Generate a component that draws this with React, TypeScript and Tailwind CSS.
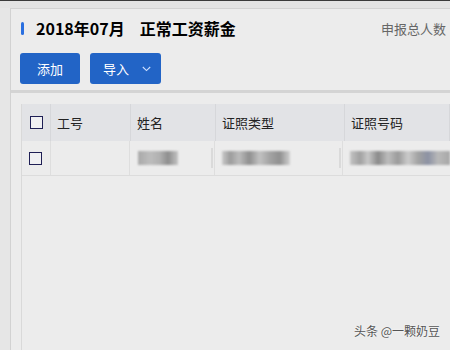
import React from "react";

const cjk = "font-['Microsoft_YaHei','Noto_Sans_CJK_SC',sans-serif]";

/** Small square checkbox drawn with a border. */
function Box() {
  return <span className="block h-[13px] w-[13px] border-[1.5px] border-[#1f1f55] bg-[#f0f0f2]" />;
}

/** Stand-in for blurred cell text. */
function Smudge({ w, tones }: { w: number; tones: string }) {
  return (
    <span
      className="block h-[14px] blur-[1.1px]"
      style={{ width: w, backgroundImage: tones }}
    />
  );
}

const cols = ["w-[29px]", "w-[80px]", "w-[85px]", "w-[129px]", "flex-1"];

export default function App() {
  return (
    <div className={`relative h-[350px] w-[450px] overflow-hidden bg-[#e6e6e6] ${cjk}`}>
      <div className="h-px bg-[#3a3a3a]" />
      <div className="h-[7px] bg-[#e3e3e3]" />

      <div className="ml-[10px] h-[342px] border-l border-t border-[#d2d2d2] bg-[#ececec]">
        {/* header */}
        <div className="h-[84px] border-b-[3px] border-[#d4d4d4] pl-[10px] pr-[4px] pt-[10px]">
          <div className="flex h-[18px] items-center">
            <span className="h-[13px] w-[3px] rounded-full bg-[#2a6fe0]" />
            <span className="ml-[12px] text-[16px] font-bold leading-none text-black">
              2018年07月
            </span>
            <span className="ml-[15px] text-[16px] font-bold leading-none text-black">
              正常工资薪金
            </span>
            <span className="ml-auto text-[13px] leading-none text-[#666]">申报总人数</span>
          </div>
          <div className="-ml-px mt-[16px] flex gap-[10px]">
            <button className="flex h-[31px] w-[60px] items-center justify-center rounded-[3px] bg-[#2264c6] text-[13px] text-white">
              添加
            </button>
            <button className="flex h-[31px] w-[71px] items-center rounded-[3px] bg-[#2264c6] pl-[13px] text-[13px] text-white">
              导入
              <svg className="ml-[13px]" width="9" height="6" viewBox="0 0 9 6" fill="none">
                <path d="M0.8 1 L4.5 4.6 L8.2 1" stroke="#cfe0ff" strokeWidth="1.1" />
              </svg>
            </button>
          </div>
        </div>

        {/* table */}
        <div className="pl-[10px] pt-[11px]">
          <div className="h-[300px] border-l border-[#d9d9d9]">
            <div className="flex h-[37px] bg-[#e2e3e6] text-[13px] text-[#222]">
              {["", "工号", "姓名", "证照类型", "证照号码"].map((t, i) => (
                <div
                  key={i}
                  className={`${cols[i]} flex items-center border-r border-[#d6d7da] ${i === 0 ? "justify-center" : "pl-[6px]"}`}
                >
                  {i === 0 ? <Box /> : t}
                </div>
              ))}
            </div>
            <div className="flex h-[35px] border-b border-[#dcdcdc] bg-[#ececec]">
              <div className={`${cols[0]} flex items-center justify-center border-r border-[#dedede]`}>
                <Box />
              </div>
              <div className={`${cols[1]} border-r border-[#dedede]`} />
              <div className={`${cols[2]} flex items-center border-r border-[#dedede] pl-[8px]`}>
                <Smudge w={40} tones="linear-gradient(90deg,#a9a9a9 0%,#bdbdbd 30%,#b0b0b0 55%,#8e8e8e 75%,#c4c4c4 100%)" />
                <span className="ml-auto mr-[1px] h-[20px] w-[2px] bg-[#dadada]" />
              </div>
              <div className={`${cols[3]} flex items-center border-r border-[#dedede] pl-[7px]`}>
                <Smudge w={68} tones="linear-gradient(90deg,#c9c9c9 0%,#9c9c9c 12%,#bcbcbc 25%,#8f8f8f 40%,#c2c2c2 55%,#a4a4a4 70%,#909090 85%,#d0d0d0 100%)" />
                <span className="ml-auto mr-[1px] h-[20px] w-[2px] bg-[#dadada]" />
              </div>
              <div className={`${cols[4]} flex items-center pl-[7px]`}>
                <Smudge w={100} tones="linear-gradient(90deg,#c4c4c4 0%,#a0a0a0 10%,#c8c8c8 18%,#8a8a8a 28%,#bdbdbd 38%,#9a9a9a 48%,#cbcbcb 58%,#a3a3a3 68%,#8c92a4 78%,#b9b9b9 88%,#a7a7a7 100%)" />
              </div>
            </div>
          </div>
        </div>
      </div>

      <span className="absolute left-[354px] top-[325px] text-[12px] leading-none text-[#555] [text-shadow:0_0_2px_#fff]">
        头条 @一颗奶豆
      </span>
    </div>
  );
}
